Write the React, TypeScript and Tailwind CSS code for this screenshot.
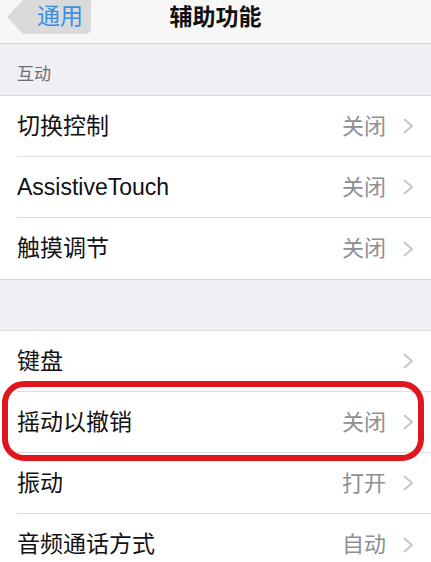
type Row = { label: string; value?: string };

const interaction: Row[] = [
  { label: "切换控制", value: "关闭" },
  { label: "AssistiveTouch", value: "关闭" },
  { label: "触摸调节", value: "关闭" },
];

const others: Row[] = [
  { label: "键盘" },
  { label: "摇动以撤销", value: "关闭" },
  { label: "振动", value: "打开" },
  { label: "音频通话方式", value: "自动" },
];

function Chevron() {
  return (
    <svg width="11" height="16" viewBox="0 0 11 16" className="shrink-0">
      <polyline
        points="1.5,1.5 9,8 1.5,14.5"
        fill="none"
        stroke="#c4c4c9"
        strokeWidth="1.8"
        strokeLinecap="round"
        strokeLinejoin="round"
      />
    </svg>
  );
}

function Group({ rows }: { rows: Row[] }) {
  return (
    <div className="bg-white border-y border-[#d9d9de]">
      {rows.map((row, i) => (
        <div key={row.label} className="pl-[17px]">
          <div
            className={
              "flex h-[61px] items-center pr-[17px] " +
              (i < rows.length - 1 ? "border-b border-[#dedee2]" : "")
            }
          >
            <span className="flex-1 text-[23px] text-[#111]">{row.label}</span>
            {row.value && (
              <span className="mr-[17px] text-[22px] text-[#8e8e93]">{row.value}</span>
            )}
            <Chevron />
          </div>
        </div>
      ))}
    </div>
  );
}

export default function App() {
  return (
    <div
      className="relative h-[562px] w-[431px] overflow-hidden bg-[#efeff4]"
      style={{ fontFamily: '"Liberation Sans", "Noto Sans CJK SC", sans-serif' }}
    >
      {/* Nav bar */}
      <div className="grid h-[44px] grid-cols-[1fr_auto_1fr] border-b border-[#cfcfd3] bg-[#f7f7f7]">
        <div className="pl-[7px]">
          <div className="relative h-[34px] w-[84px]">
            <svg width="84" height="34" viewBox="0 0 84 34" className="absolute inset-0">
              <path d="M0 17 L16 0 H84 V28 Q84 34 78 34 H16 Z" fill="#dadada" />
            </svg>
            <span className="relative block pl-[30px] pt-[3px] text-[23px] leading-[26px] text-[#3a8ee6]">
              通用
            </span>
          </div>
        </div>
        <div className="pt-[4px] text-[23px] font-semibold leading-[26px] text-[#111]">辅助功能</div>
        <div />
      </div>

      {/* Section header */}
      <div className="h-[51px] pl-[17px] pt-[21px] text-[17px] leading-[20px] text-[#6d6d72]">互动</div>

      <Group rows={interaction} />
      <div className="h-[50px]" />
      <Group rows={others} />

      {/* Red highlight */}
      <div className="absolute left-[2px] top-[381px] h-[80px] w-[422px] rounded-[22px] border-[6px] border-[#e0161f]" />
    </div>
  );
}
